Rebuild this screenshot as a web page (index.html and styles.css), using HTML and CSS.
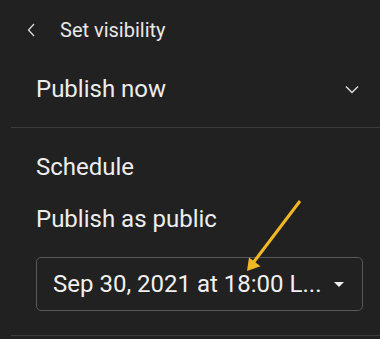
FILE: index.html
```html
<!DOCTYPE html>
<html>
<head>
<meta charset="utf-8">
<link rel="stylesheet" href="styles.css">
</head>
<body>
<div class="screen">
  <header class="header">
    <svg class="back" width="8" height="14" viewBox="0 0 8 14"><path d="M7 1 L1.5 7 L7 13" fill="none" stroke="#d8d8d8" stroke-width="1.3"/></svg>
    <span class="title">Set visibility</span>
  </header>
  <div class="row-now">
    <span class="big">Publish now</span>
    <svg class="chev" width="14" height="9" viewBox="0 0 14 9"><path d="M1 1.5 L7 7.5 L13 1.5" fill="none" stroke="#e0e0e0" stroke-width="1.4"/></svg>
  </div>
  <div class="divider"></div>
  <div class="section">
    <div class="big schedule">Schedule</div>
    <div class="big public">Publish as public</div>
    <div class="select">
      <span class="select-text">Sep 30, 2021 at 18:00 L...</span>
      <svg class="tri" width="10" height="5" viewBox="0 0 10 5"><path d="M0 0 L10 0 L5 5 Z" fill="#f0f0f0"/></svg>
    </div>
  </div>
  <div class="divider"></div>
  <svg class="arrow" width="380" height="339" viewBox="0 0 380 339">
    <line x1="300" y1="201" x2="253" y2="263" stroke="#f2b824" stroke-width="3" stroke-linecap="butt"/>
    <path d="M247 271 L249 257.5 L260.5 266.2 Z" fill="#f2b824"/>
  </svg>
</div>
</body>
</html>
```
FILE: styles.css
```css
html, body {
  margin: 0;
  padding: 0;
  background: #212121;
}
body {
  font-family: Roboto, "Noto Sans", sans-serif;
  color: #ededed;
}
.screen {
  position: relative;
  width: 380px;
  height: 339px;
  overflow: hidden;
}
.header {
  height: 60px;
  display: flex;
  align-items: center;
  padding-left: 27px;
}
.back {
  display: block;
}
.title {
  font-size: 20px;
  line-height: 20px;
  margin-left: 25px;
  color: #e8e8e8;
}
.row-now {
  height: 58px;
  display: flex;
  align-items: center;
  justify-content: space-between;
  padding: 0 21px 0 36px;
  margin-bottom: 9px;
}
.big {
  font-size: 24px;
  line-height: 24px;
}
.chev {
  display: block;
}
.divider {
  height: 1px;
  background: #3b3b3b;
  margin-left: 11px;
}
.section {
  padding: 27px 17px 24px 36px;
}
.schedule {
  margin-bottom: 27.5px;
}
.public {
  margin-bottom: 26.5px;
}
.select {
  height: 52px;
  border: 1px solid #575757;
  border-radius: 5px;
  display: flex;
  align-items: center;
  justify-content: space-between;
  padding: 0 18px 0 16px;
}
.select-text {
  font-size: 24px;
  line-height: 24px;
  color: #f0f0f0;
}
.tri {
  display: block;
}
.arrow {
  position: absolute;
  left: 0;
  top: 0;
  pointer-events: none;
}
```
